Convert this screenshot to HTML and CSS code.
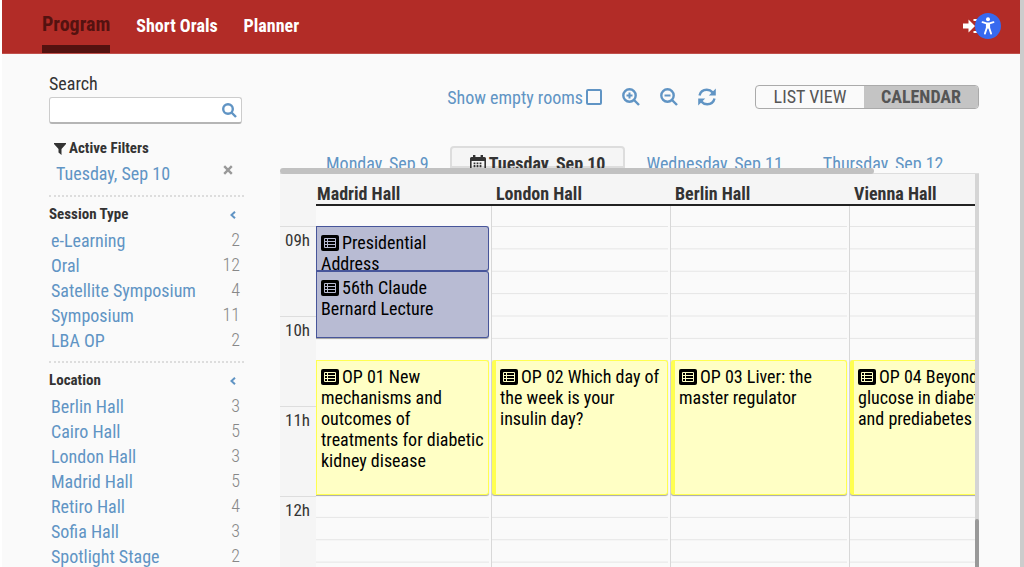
FILE: index.html
```html
<!DOCTYPE html>
<html lang="en">
<head>
<meta charset="UTF-8">
<title>Program - Tuesday, Sep 10</title>
<link rel="stylesheet" href="styles.css">
</head>
<body>

<svg class="sprite" aria-hidden="true">
  <symbol id="i-list" viewBox="0 0 18 16">
    <path fill="currentColor" d="M2 0h14a2 2 0 0 1 2 2v12a2 2 0 0 1-2 2H2a2 2 0 0 1-2-2V2a2 2 0 0 1 2-2z"/>
    <path fill="none" stroke="var(--card)" stroke-width="1" d="M3.500 3.500h11v9h-11zM3.500 6.500h11M3.500 9.500h11M6.500 3.500v9"/>
  </symbol>
</svg>

<div class="page">
  <header class="topbar">
    <nav class="menu">
      <a class="active" href="#program">Program</a>
      <a href="#orals">Short Orals</a>
      <a href="#planner">Planner</a>
    </nav>
    <div class="account">
      <a class="login" href="#login" aria-label="Log in">
        <svg width="16" height="14" viewBox="0 0 16 14"><path fill="#fff" d="M0 4.600h5.500V.4L12 7l-6.500 6.600V9.400H0z"/><path fill="none" stroke="#fff" stroke-width="2" d="M10.500 1H13a2 2 0 0 1 2 2v8a2 2 0 0 1-2 2h-2.500"/></svg>
      </a>
      <button class="access" aria-label="Accessibility">
        <svg width="26" height="26" viewBox="0 0 26 26"><circle cx="13" cy="6.300" r="2" fill="#fff"/><path fill="none" stroke="#fff" stroke-width="1.800" stroke-linecap="round" stroke-linejoin="round" d="M7.500 9.200l4 1.200h3l4-1.200M11.800 10.600v4.300l-1.900 5.700M14.200 10.600v4.300l1.900 5.700"/><path fill="#fff" d="M11.200 10h3.600v5.500h-3.600z"/></svg>
      </button>
    </div>
  </header>

  <main class="content">
    <aside class="filters">
      <label class="search-label" for="search">Search</label>
      <div class="search">
        <input type="text" id="search">
        <button aria-label="Search">
          <svg width="15" height="15" viewBox="0 0 15 15"><circle cx="6" cy="6" r="4.800"/><path d="M9.500 9.500l4.500 4.500"/></svg>
        </button>
      </div>

      <section class="current">
        <h3><svg width="12" height="12" viewBox="0 0 12 12"><path fill="currentColor" d="M0 0h12v1L7.500 6v6L4.500 9.500V6L0 1z"/></svg>Active Filters</h3>
        <div class="chosen">
          <a href="#day">Tuesday, Sep 10</a>
          <button aria-label="Remove filter"><svg width="10" height="10" viewBox="0 0 10 10"><path d="M1.200 1.200l7.600 7.600M8.800 1.200L1.200 8.800"/></svg></button>
        </div>
      </section>

      <section class="group">
        <h3>Session Type <button aria-label="Collapse session type"><svg width="6" height="8" viewBox="0 0 6 8"><path d="M5 .8L1.500 4 5 7.200"/></svg></button></h3>
        <ul>
          <li><a href="#s1">e-Learning</a><span>2</span></li>
          <li><a href="#s2">Oral</a><span>12</span></li>
          <li><a href="#s3">Satellite Symposium</a><span>4</span></li>
          <li><a href="#s4">Symposium</a><span>11</span></li>
          <li><a href="#s5">LBA OP</a><span>2</span></li>
        </ul>
      </section>

      <section class="group">
        <h3>Location <button aria-label="Collapse location"><svg width="6" height="8" viewBox="0 0 6 8"><path d="M5 .8L1.500 4 5 7.200"/></svg></button></h3>
        <ul>
          <li><a href="#l1">Berlin Hall</a><span>3</span></li>
          <li><a href="#l2">Cairo Hall</a><span>5</span></li>
          <li><a href="#l3">London Hall</a><span>3</span></li>
          <li><a href="#l4">Madrid Hall</a><span>5</span></li>
          <li><a href="#l5">Retiro Hall</a><span>4</span></li>
          <li><a href="#l6">Sofia Hall</a><span>3</span></li>
          <li><a href="#l7">Spotlight Stage</a><span>2</span></li>
        </ul>
      </section>
    </aside>

    <div class="schedule">
      <div class="toolbar">
        <label class="empty-rooms">Show empty rooms<input type="checkbox"></label>
        <button class="tool" aria-label="Zoom in"><svg width="18" height="18" viewBox="0 0 18 18"><circle cx="7.500" cy="7.500" r="6.200"/><path d="M12 12l5 5"/><path class="thin" d="M4.500 7.500h6M7.500 4.500v6"/></svg></button>
        <button class="tool" aria-label="Zoom out"><svg width="18" height="18" viewBox="0 0 18 18"><circle cx="7.500" cy="7.500" r="6.200"/><path d="M12 12l5 5"/><path class="thin" d="M4.500 7.500h6"/></svg></button>
        <button class="tool" aria-label="Refresh"><svg width="18" height="18" viewBox="0 0 18 18"><path d="M1.500 7.500C2.300 4 5.300 1.800 8.800 1.800c2.400 0 4.300.9 5.800 2.600M16.500 10.500c-.8 3.500-3.800 5.700-7.300 5.700-2.400 0-4.300-.9-5.800-2.600"/><path class="head" d="M17.800.5v7h-7zM.2 17.500v-7h7z"/></svg></button>
        <div class="views">
          <button>LIST VIEW</button>
          <button class="on">CALENDAR</button>
        </div>
      </div>

      <nav class="days">
        <a href="#d9">Monday, Sep 9</a>
        <a class="on" href="#d10"><svg width="16" height="17" viewBox="0 0 16 17"><path fill="currentColor" fill-rule="evenodd" d="M3 0h2.400v2h5.200V0H13v2h1.500A1.500 1.500 0 0 1 16 3.500v12a1.500 1.500 0 0 1-1.500 1.500h-13A1.500 1.500 0 0 1 0 15.500v-12A1.500 1.500 0 0 1 1.500 2H3zM1.600 6v9.400h12.800V6z"/><path stroke="currentColor" stroke-width="1.800" stroke-dasharray="1.800 1.200" d="M3.600 8.400h9M3.600 11h9M3.600 13.600h9"/></svg>Tuesday, Sep 10</a>
        <a href="#d11">Wednesday, Sep 11</a>
        <a href="#d12">Thursday, Sep 12</a>
      </nav>

      <div class="calendar">
        <div class="hscroll"><div class="thumb"></div></div>
        <div class="grid">
          <div class="hours">
            <span>09h</span>
            <span>10h</span>
            <span>11h</span>
            <span>12h</span>
          </div>
          <div class="rooms">
            <section class="room">
              <h2>Madrid Hall</h2>
              <div class="slots">
                <article class="event plenary at-0900"><svg><use href="#i-list"/></svg>Presidential Address</article>
                <article class="event plenary at-0930"><svg><use href="#i-list"/></svg>56th Claude Bernard Lecture</article>
                <article class="event oral at-1030"><svg><use href="#i-list"/></svg>OP 01 New mechanisms and outcomes of treatments for diabetic kidney disease</article>
              </div>
            </section>
            <section class="room">
              <h2>London Hall</h2>
              <div class="slots">
                <article class="event oral at-1030"><svg><use href="#i-list"/></svg>OP 02 Which day of the week is your insulin day?</article>
              </div>
            </section>
            <section class="room">
              <h2>Berlin Hall</h2>
              <div class="slots">
                <article class="event oral at-1030"><svg><use href="#i-list"/></svg>OP 03 Liver: the master regulator</article>
              </div>
            </section>
            <section class="room">
              <h2>Vienna Hall</h2>
              <div class="slots">
                <article class="event oral at-1030"><svg><use href="#i-list"/></svg>OP 04 Beyond glucose in diabetes and prediabetes</article>
              </div>
            </section>
          </div>
          <div class="vscroll"><div class="thumb"></div></div>
        </div>
      </div>
    </div>
  </main>
</div>

</body>
</html>
```
FILE: styles.css
```css
* { box-sizing: border-box; }

body {
  margin: 0;
  background: #fff;
  color: #333;
  font-family: "Roboto Condensed", "Liberation Sans Narrow", Roboto, sans-serif;
  font-size: 18px;
  line-height: 25px;
}

a { color: #6094c4; text-decoration: none; }
h2, h3, ul { margin: 0; padding: 0; }
button { border: 0; padding: 0; background: none; font: inherit; color: inherit; }
svg { display: block; flex: none; }
.sprite { display: none; }

.page {
  display: flex;
  flex-direction: column;
  height: 100vh;
  overflow: hidden;
  margin-left: 2px;
  border-right: 4px solid #ccc;
  background: #fafafa;
}

/* top bar */
.topbar {
  display: flex;
  justify-content: space-between;
  flex: none;
  height: 54px;
  padding: 0 19px 0 40px;
  background: #b22c27;
  border-bottom: 1px solid #c0504b;
}
.menu { display: flex; gap: 26px; font-weight: bold; }
.menu a { color: #fff; line-height: 52px; }
.menu .active {
  color: #541210;
  border-bottom: 8px solid #541210;
  font-size: 20px;
  line-height: 48px;
  height: 53px;
}
.account { display: flex; align-items: center; height: 51px; }
.login { margin-right: -4px; }
.access {
  position: relative;
  width: 26px;
  height: 26px;
  border-radius: 50%;
  background: #3769ef;
}

.content {
  display: grid;
  grid-template-columns: 195px minmax(0, 1fr);
  gap: 36px;
  flex: 1;
  min-height: 0;
  padding: 0 41px 0 47px;
}

/* sidebar */
.filters { padding-top: 17px; }
.filters h3 {
  display: flex;
  align-items: center;
  font-size: 15px;
  line-height: 25px;
}
.search-label { display: block; }
.search {
  display: flex;
  align-items: center;
  height: 27px;
  margin: 1px 2px 0 0;
  padding: 0 4px;
  background: #fff;
  border: 1px solid #ccc;
  border-bottom: 2px solid #b5b5b5;
  border-radius: 3px;
}
.search input { flex: 1; min-width: 0; border: 0; outline: 0; background: none; }
.search svg, .tool svg, .group h3 svg {
  fill: none;
  stroke: #6094c4;
  stroke-width: 2.4;
}
.group h3 svg { stroke-width: 2; }
.current { padding: 12px 0 9px 5px; }
.current h3 svg { margin-right: 3px; }
.chosen { display: flex; justify-content: space-between; padding: 0 11px 0 2px; }
.chosen svg { stroke: #999; stroke-width: 2.4; }
.chosen button { height: 17px; }
.group { border-top: 2px dotted #ddd; padding: 5px 0 8px; }
.group h3 { justify-content: space-between; padding-right: 8px; }
.group ul { list-style: none; padding: 1px 4px 0 2px; }
.group li { display: flex; justify-content: space-between; }
.group span { color: #888; font-weight: 300; line-height: 23px; }

/* toolbar above the calendar */
.schedule { display: flex; flex-direction: column; min-height: 0; }
.toolbar {
  display: flex;
  align-items: center;
  justify-content: flex-end;
  height: 22px;
  margin-top: 32px;
}
.empty-rooms { display: flex; align-items: center; gap: 3px; color: #6094c4; }
.empty-rooms input {
  appearance: none;
  width: 16px;
  height: 16px;
  margin: 0;
  border: 2px solid #6094c4;
  border-radius: 2px;
}
.tool { margin-left: 20px; }
.tool .thin { stroke-width: 2; }
.tool .head { fill: #6094c4; stroke: none; }
.views {
  display: flex;
  height: 24px;
  margin-left: 39px;
  border: 1px solid #aaa;
  border-radius: 4px;
  overflow: hidden;
  color: #555;
}
.views button { width: 108px; line-height: 22px; }
.views .on { width: 114px; background: #c4c4c4; font-weight: bold; }

.days {
  display: flex;
  flex: none;
  height: 22px;
  margin-top: 38px;
  overflow: hidden;
  padding-left: 26px;
}
.days a { padding: 4px 19px; border: 1px solid transparent; white-space: nowrap; }
.days .on {
  display: flex;
  gap: 3px;
  margin: 0 1px;
  padding: 3px 18px;
  border: 2px solid #ddd;
  border-radius: 4px 4px 0 0;
  background: #f5f5f5;
  color: #333;
  font-weight: bold;
}
.days svg { margin-top: 4px; }

/* calendar */
.calendar { flex: 1; min-height: 0; overflow: hidden; }
.hscroll { height: 6px; border-bottom: 1px solid #ddd; }
.hscroll .thumb { width: 85%; height: 6px; border-radius: 3px; background: #c1c1c1; }
.grid { display: flex; position: relative; background: #f5f5f5; }
.hours { flex: none; width: 36px; padding-top: 52px; }
.hours span {
  display: block;
  height: 90px;
  padding-right: 6px;
  border-top: 1px solid #ddd;
  font-size: 17px;
  line-height: 27px;
  text-align: right;
}
.rooms { display: flex; flex: 1; min-width: 0; overflow: hidden; }
/* the first room starts a little under the hour column */
.room { flex: 0 0 179px; }
.room:first-child { margin-left: -3px; }
.room h2 {
  height: 32px;
  padding: 4px 0 0 4px;
  border-bottom: 2px solid #222;
  font-size: 18px;
  line-height: 31px;
}
.slots {
  display: grid;
  grid-template-rows: repeat(16, 1fr);
  height: 378px;
  padding: 20px 2px 0 0;
  border-right: 1px solid #d8d8d8;
  background: linear-gradient(#e5e5e5, #e5e5e5 1px, #fafafa 1px) content-box, linear-gradient(#fafafa, #fafafa);
  background-size: 100% calc(100% / 16), 100% 100%;
}
.event {
  --card: #ffffc5;
  grid-column: 1;
  min-height: 0;
  overflow: hidden;
  padding: 5px 4px 0;
  border: 1px solid #ffff50;
  border-left-width: 4px;
  border-radius: 3px;
  background: var(--card);
  box-shadow: 0 1px 1px rgba(0, 0, 0, 0.3);
  color: #000;
  line-height: 21px;
}
.event svg { display: inline-block; width: 18px; height: 16px; margin-right: 3px; vertical-align: -2px; }
.plenary { --card: #b8bbd3; border-color: #47559a; }
.at-0900 { grid-row: 1 / span 2; }
.at-0930 { grid-row: 3 / span 3; }
.at-1030 { grid-row: 7 / span 6; }

.vscroll {
  display: flex;
  flex-direction: column;
  justify-content: flex-end;
  width: 4px;
  height: 393px;
  background: #d5d5d5;
}
.vscroll .thumb { height: 48px; background: #999; border-radius: 2px 2px 0 0; }
```
